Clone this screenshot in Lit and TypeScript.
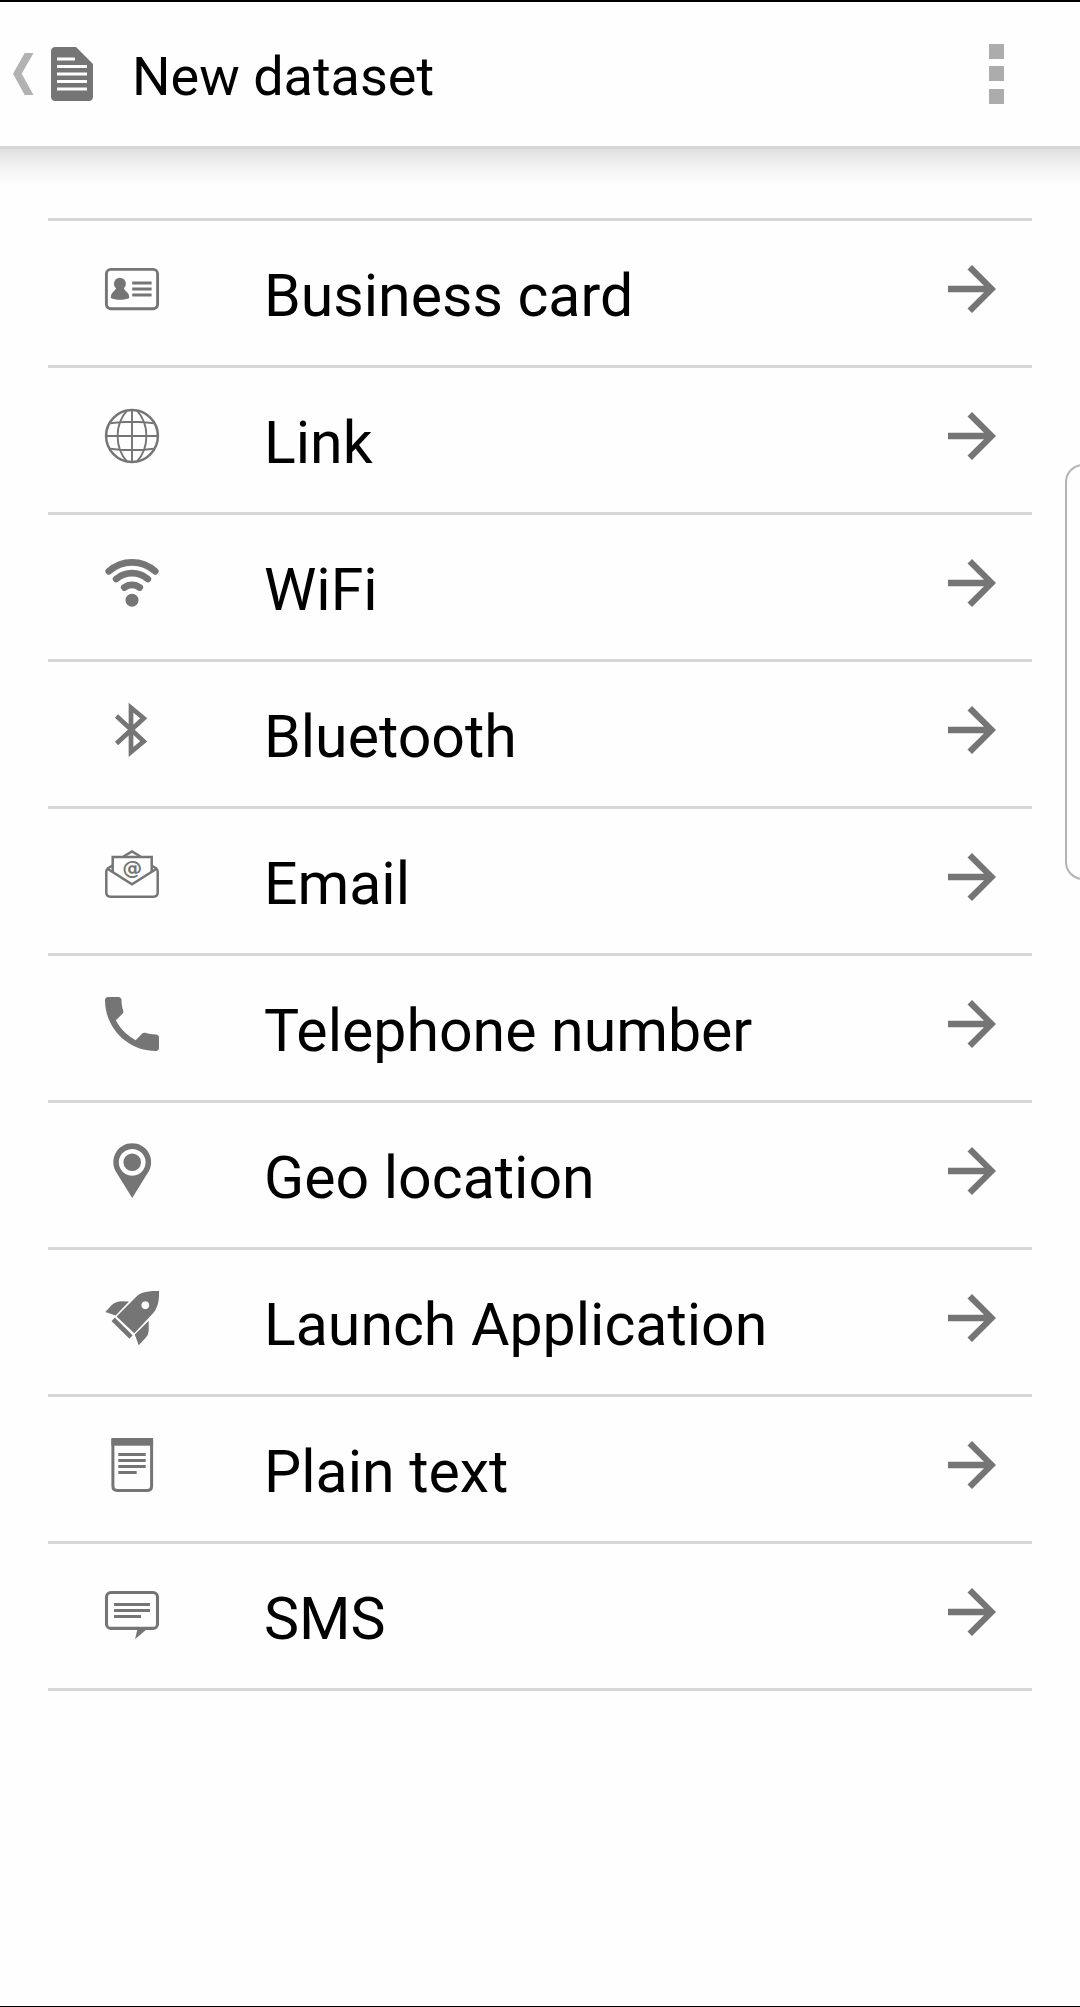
import { LitElement, html, svg, css } from "lit";
import { customElement, property } from "lit/decorators.js";

const icons: Record<string, unknown> = {
  card: svg`
    <rect x="1.4" y="7.4" width="51.2" height="39.400" rx="4.5" fill="none" stroke="currentColor" stroke-width="2.9"/>
    <circle cx="14.9" cy="21.8" r="6"/>
    <path d="M11.200 25.500H18.600C19 29 24.300 29.500 24.300 36C20 38.400 10 38.400 5.800 36C5.800 29.500 10.800 29 11.200 25.500Z"/>
    <path d="M27.200 21H46.600M27.200 27H46.600M27.200 33H46.600" stroke="currentColor" stroke-width="3.200"/>`,
  globe: svg`
    <g fill="none" stroke="currentColor">
      <circle cx="27" cy="27" r="25.900" stroke-width="2.500"/>
      <path stroke-width="1.900" d="M27 1V53M1 27H53M22 1.600C9.500 15 9.500 39 22 52.400M32 1.600C44.500 15 44.500 39 32 52.400M5.500 14.300C16 12.200 38 12.200 48.500 14.300M5.500 39.700C16 41.400 38 41.400 48.500 39.700"/>
    </g>`,
  wifi: svg`
    <g fill="none" stroke="currentColor" stroke-width="6.8" stroke-linecap="round">
      <path d="M3.800 15.300A34.400 34.400 0 0 1 50.200 15.300"/>
      <path d="M11.200 23A24.300 24.300 0 0 1 42.800 23"/>
      <path d="M19.300 31.500A12.500 12.500 0 0 1 34.700 31.500"/>
    </g>
    <circle cx="27" cy="44.200" r="6.500"/>`,
  bluetooth: svg`<path d="M11.500 13L38.700 38.300L26 49V4.800L38.700 15.300L11.500 40.500" fill="none" stroke="currentColor" stroke-width="4.700" stroke-miterlimit="8"/>`,
  email: svg`
    <g fill="none" stroke="currentColor" stroke-width="2.500">
      <path d="M7.500 15.500L3 18.200Q1.300 19.500 1.300 21.500V42.500Q1.300 46.700 5.500 46.700H48.500Q52.700 46.700 52.700 42.500V21.500Q52.700 19.500 51 18.200L46.500 15.500"/>
      <path d="M2 18.500L27 34.200L52 18.500"/>
      <path d="M7.700 22V7H46.700V22"/>
      <path d="M18.500 6.500L27 1.400L35.500 6.500"/>
    </g>
    <text class="at" x="27.300" y="25" text-anchor="middle">@</text>`,
  phone: svg`<path transform="scale(3) translate(-3 -3)" d="M6.620 10.790c1.440 2.830 3.760 5.140 6.590 6.590l2.200-2.200c.27-.27.67-.36 1.020-.24 1.120.37 2.330.57 3.570.57.55 0 1 .45 1 1V20c0 .55-.45 1-1 1-9.390 0-17-7.610-17-17 0-.55.45-1 1-1h3.500c.55 0 1 .45 1 1 0 1.250.2 2.450.57 3.570.11.35.03.74-.25 1.020l-2.200 2.200z"/>`,
  pin: svg`
    <path fill-rule="evenodd" d="M27.200 54L10.500 27A18.900 18.900 0 1 1 43.900 27ZM27.200 4.900a13.400 13.400 0 1 0 .01 0Z"/>
    <circle cx="27.200" cy="18.300" r="8.800"/>`,
  rocket: svg`
    <path fill-rule="evenodd" d="M54 0C54.300 8 53.500 15.500 48.500 21.800L29.300 42.200L11.600 25.500L32 5C38 0 46 0 54 0ZM40.300 10.300a4 4 0 1 0 .01 0Z"/>
    <path d="M.3 20.900L6.500 14.300Q11 10.100 17 10.200L24 10.500L10.600 24.400Z"/>
    <path d="M43.700 29.700V40Q43.500 44 40.500 47L33.700 54.300L29.800 43.600Z"/>
    <path d="M9.700 26.600L27.600 44.300L24.500 47.800L6.600 30.200Z"/>`,
  text: svg`
    <path d="M7.900 1V48Q7.900 52.400 12.300 52.400H42.200Q46.600 52.400 46.600 48V1" fill="none" stroke="currentColor" stroke-width="3"/>
    <rect x="6.400" y="0" width="41.700" height="7.700"/>
    <path d="M13.300 16.500H40.700M13.300 22.500H40.700M13.300 28.500H40.700M13.300 34.500H31.700" stroke="currentColor" stroke-width="3.200"/>`,
  sms: svg`
    <rect x="1.500" y="7.500" width="51" height="35.900" rx="4.500" fill="none" stroke="currentColor" stroke-width="3.100"/>
    <path d="M9 19.500H45M9 25.500H45M9 31.500H36" stroke="currentColor" stroke-width="3.200"/>
    <path d="M32.500 44H42L30 54.300Z"/>`,
};

@customElement("dataset-row")
class DatasetRow extends LitElement {
  @property() icon = "";
  @property() label = "";

  static styles = css`
    :host {
      display: flex;
      align-items: flex-start;
      box-sizing: border-box;
      height: 147px;
      padding: 41px 36px 0 57px;
      border-bottom: 3px solid #d6d7d7;
      color: #757575;
    }
    svg { display: block; flex: none; fill: currentColor; overflow: visible; }
    .icon { width: 54px; height: 54px; }
    .arrow { width: 48px; height: 48px; margin-top: 3px; }
    .label {
      flex: 1;
      margin: -3px 0 0 105px;
      color: #000;
      font-size: 59px;
      line-height: 74px;
      white-space: nowrap;
    }
    .at { font: bold 20px "DejaVu Sans", sans-serif; }
  `;

  render() {
    return html`
      <svg class="icon" viewBox="0 0 54 54">${icons[this.icon]}</svg>
      <div class="label">${this.label}</div>
      <svg class="arrow" viewBox="4 4 16 16">
        <path d="M12 4l-1.500 1.500L16 10.900H4v2.200h12l-5.500 5.400L12 20l8-8z"/>
      </svg>`;
  }
}

@customElement("app-root")
class AppRoot extends LitElement {
  private rows = [
    ["card", "Business card"],
    ["globe", "Link"],
    ["wifi", "WiFi"],
    ["bluetooth", "Bluetooth"],
    ["email", "Email"],
    ["phone", "Telephone number"],
    ["pin", "Geo location"],
    ["rocket", "Launch Application"],
    ["text", "Plain text"],
    ["sms", "SMS"],
  ];

  static styles = css`
    :host {
      display: block;
      position: relative;
      box-sizing: border-box;
      width: 1080px;
      height: 2007px;
      overflow: hidden;
      background: #fefefe;
      border-top: 2px solid #000;
      border-bottom: 1px solid #000;
      font-family: Roboto, sans-serif;
    }
    svg { display: block; flex: none; }
    .bar {
      display: flex;
      align-items: flex-start;
      box-sizing: border-box;
      height: 147px;
      padding: 0 76px 0 13px;
      border-bottom: 3px solid #d6d6d6;
    }
    .back { width: 21px; height: 42px; margin-top: 51px; fill: #b2b2b2; }
    .doc { width: 42px; height: 54px; margin: 45px 0 0 17px; fill: #757575; }
    .title {
      flex: 1;
      margin: 0 0 0 39px;
      padding-top: 43px;
      font-size: 54px;
      font-weight: 400;
      line-height: 64px;
      color: #000;
    }
    .menu { width: 15px; height: 60px; margin-top: 42px; fill: #acacac; }
    .shade {
      height: 36px;
      background: linear-gradient(#dfdfdf, #ebebeb 28%, #f5f5f5 60%, #fefefe);
    }
    .list { margin: 33px 48px 0; border-top: 3px solid #d6d7d7; }
    .edge {
      position: absolute;
      left: 1065px;
      top: 462px;
      box-sizing: border-box;
      width: 60px;
      height: 416px;
      border: 2px solid #b4b4b4;
      border-radius: 18px;
    }
  `;

  render() {
    return html`
      <header class="bar">
        <svg class="back" viewBox="0 0 21 42"><path d="M11.700 0H20.500L8.700 20.700L20.500 42H11.700L0 20.700Z"/></svg>
        <svg class="doc" viewBox="0 0 42 54">
          <path fill-rule="evenodd" d="M4.500 0H25L42 17V49.500Q42 54 37.500 54H4.500Q0 54 0 49.500V4.500Q0 0 4.500 0ZM6 10.500V13.500H24V10.500ZM6 18V21H36V18ZM6 25.500V28.500H36V25.500ZM6 33V36H36V33ZM6 40.500V43.500H36V40.500Z"/>
        </svg>
        <h1 class="title">New dataset</h1>
        <svg class="menu" viewBox="0 0 15 60"><path d="M0 0H15V15H0ZM0 22H15V37H0ZM0 45H15V60H0Z"/></svg>
      </header>
      <div class="shade"></div>
      <main class="list">
        ${this.rows.map(([icon, label]) => html`<dataset-row icon=${icon} label=${label}></dataset-row>`)}
      </main>
      <div class="edge"></div>`;
  }
}
